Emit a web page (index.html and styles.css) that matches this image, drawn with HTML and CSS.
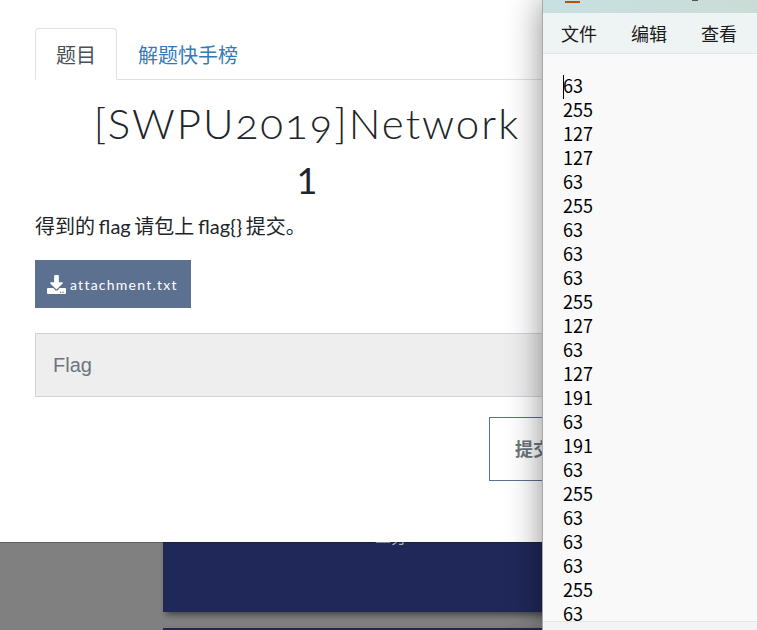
FILE: index.html
```html
<!DOCTYPE html>
<html lang="zh">
<head>
<meta charset="utf-8">
<title>[SWPU2019]Network</title>
<link rel="stylesheet" href="styles.css">
</head>
<body>
<div class="page">
  <div class="card card-first"><span class="card-label">二分</span></div>
  <div class="card card-next"></div>
</div>

<section class="modal">
  <nav class="tabs">
    <a class="tab tab-active">题目</a>
    <a class="tab tab-link">解题快手榜</a>
  </nav>
  <h1 class="title">[SWPU2019]Network</h1>
  <h2 class="points">1</h2>
  <p class="desc">得到的 flag 请包上 flag{} 提交。</p>
  <a class="attachment">
    <svg class="dl-icon" viewBox="0 0 512 512" aria-hidden="true"><path fill="currentColor" d="M216 0h80c13.3 0 24 10.7 24 24v168h87.7c17.8 0 26.7 21.5 14.1 34.1L269.7 378.3c-7.5 7.5-19.8 7.5-27.3 0L90.1 226.1c-12.6-12.6-3.7-34.1 14.1-34.1H192V24c0-13.3 10.7-24 24-24zm296 376v112c0 13.3-10.7 24-24 24H24c-13.3 0-24-10.7-24-24V376c0-13.3 10.7-24 24-24h146.7l49 49c20.1 20.1 52.5 20.1 72.6 0l49-49H488c13.3 0 24 10.7 24 24zm-124 88c0-11-9-20-20-20s-20 9-20 20 9 20 20 20 20-9 20-20zm64 0c0-11-9-20-20-20s-20 9-20 20 9 20 20 20 20-9 20-20z"/></svg>
    <span>attachment.txt</span>
  </a>
  <div class="flag-input">Flag</div>
  <div class="submit-row"><button class="submit">提交</button></div>
</section>

<aside class="notepad">
  <div class="np-title"><span class="np-tab"></span><span class="np-mark"></span></div>
  <div class="np-menu"><span>文件</span><span>编辑</span><span>查看</span></div>
  <div class="np-text">
    <span class="caret"></span>
    <div>63</div><div>255</div><div>127</div><div>127</div><div>63</div><div>255</div><div>63</div><div>63</div><div>63</div><div>255</div><div>127</div><div>63</div><div>127</div><div>191</div><div>63</div><div>191</div><div>63</div><div>255</div><div>63</div><div>63</div><div>63</div><div>255</div><div>63</div>
  </div>
  <div class="np-status"></div>
</aside>
</body>
</html>
```
FILE: styles.css
```css
* { box-sizing: border-box; }
html, body { margin: 0; padding: 0; }
body {
  position: relative;
  width: 757px;
  height: 630px;
  overflow: hidden;
  background: #808080;
  font-family: Lato, "Noto Sans CJK SC", sans-serif;
  color: #212529;
}
.page { padding: 480px 0 0 163px; }
.card {
  width: 500px;
  background: #1f2859;
  box-shadow: 3px 3px 6px rgba(0, 0, 0, .45);
}
.card-first { height: 132px; padding: 47px 0 0 212px; }
.card-label { color: #b0b4c4; font-size: 16px; line-height: 20px; display: block; }
.card-next { height: 2px; margin-top: 16px; }

.modal {
  position: absolute;
  top: 0;
  left: 0;
  width: 620px;
  height: 542px;
  padding: 28px 41px 0 35px;
  background: #fff;
  box-shadow: 0 1px 0 rgba(0, 0, 0, .25);
}
.tabs {
  display: flex;
  height: 52px;
  border-bottom: 1px solid #dee2e6;
}
.tab {
  font-size: 20px;
  height: 52px;
  padding: 0 20px;
  border: 1px solid transparent;
  border-radius: 4px 4px 0 0;
  line-height: 53px;
}
.tab-active {
  color: #495057;
  background: #fff;
  border-color: #dee2e6 #dee2e6 #fff;
}
.tab-link { color: #337ab7; }
.title {
  margin: 19px 0 0;
  font-size: 42px;
  line-height: 48px;
  font-weight: 300;
  text-align: center;
  letter-spacing: 2px;
  font-variant-numeric: oldstyle-nums;
}
.points {
  margin: 9px 0 0;
  font-size: 36px;
  line-height: 48px;
  font-weight: 400;
  text-align: center;
}
.desc {
  margin: 7px 0 0;
  font-size: 20px;
  line-height: 30px;
  word-spacing: -1.5px;
}
.attachment {
  display: flex;
  align-items: center;
  gap: 4px;
  width: 156px;
  height: 48px;
  margin-top: 19px;
  padding-left: 12px;
  background: #5c7090;
  color: #fff;
  font-size: 14px;
  letter-spacing: 1.25px;
}
.dl-icon { width: 19px; height: 19px; flex: none; }
.flag-input {
  height: 64px;
  margin-top: 25px;
  padding: 0 17px;
  background: #eee;
  border: 1px solid #ced4da;
  color: #6c757d;
  font-family: "Liberation Sans", sans-serif;
  font-size: 20px;
  line-height: 62px;
}
.submit-row {
  display: flex;
  justify-content: flex-end;
  margin-top: 20px;
}
.submit {
  width: 90px;
  height: 64px;
  padding: 0 2px 2px 0;
  background: #fff;
  border: 1px solid #5c7090;
  color: #6c757d;
  font-family: Lato, "Noto Sans CJK SC", sans-serif;
  font-size: 18px;
  font-weight: 700;
}

.notepad {
  position: absolute;
  top: 0;
  left: 542px;
  width: 215px;
  height: 630px;
  display: flex;
  flex-direction: column;
  background: #f9f9f9;
  border-left: 1px solid #a9a9ab;
  box-shadow: 0 0 32px rgba(0, 0, 0, .45);
  font-family: "Noto Sans CJK SC", sans-serif;
  color: #000;
}
.np-title {
  position: relative;
  flex: none;
  height: 13px;
  background: linear-gradient(90deg, #c7e0e1, #cbdcd6);
}
.np-tab { position: absolute; left: 22px; top: 1px; width: 15px; height: 2px; background: #b4540a; }
.np-mark { position: absolute; left: 149px; top: 0; width: 6px; height: 1px; background: #555; }
.np-menu {
  flex: none;
  display: flex;
  gap: 34px;
  height: 41px;
  padding: 0 0 0 18px;
  background: #eef4f3;
  border-bottom: 1px solid #e5e5e5;
  font-size: 18px;
  line-height: 40px;
  color: #1a1a1a;
}
.np-text {
  position: relative;
  flex: 1;
  min-height: 0;
  overflow: hidden;
  padding: 19px 0 0 20px;
  font-size: 18px;
  line-height: 24px;
}
.caret {
  position: absolute;
  left: 20px;
  top: 21px;
  width: 1px;
  height: 24px;
  background: #000;
}
.np-status {
  flex: none;
  height: 9px;
  background: #f3f3f3;
  border-top: 1px solid #e5e5e5;
}
```
